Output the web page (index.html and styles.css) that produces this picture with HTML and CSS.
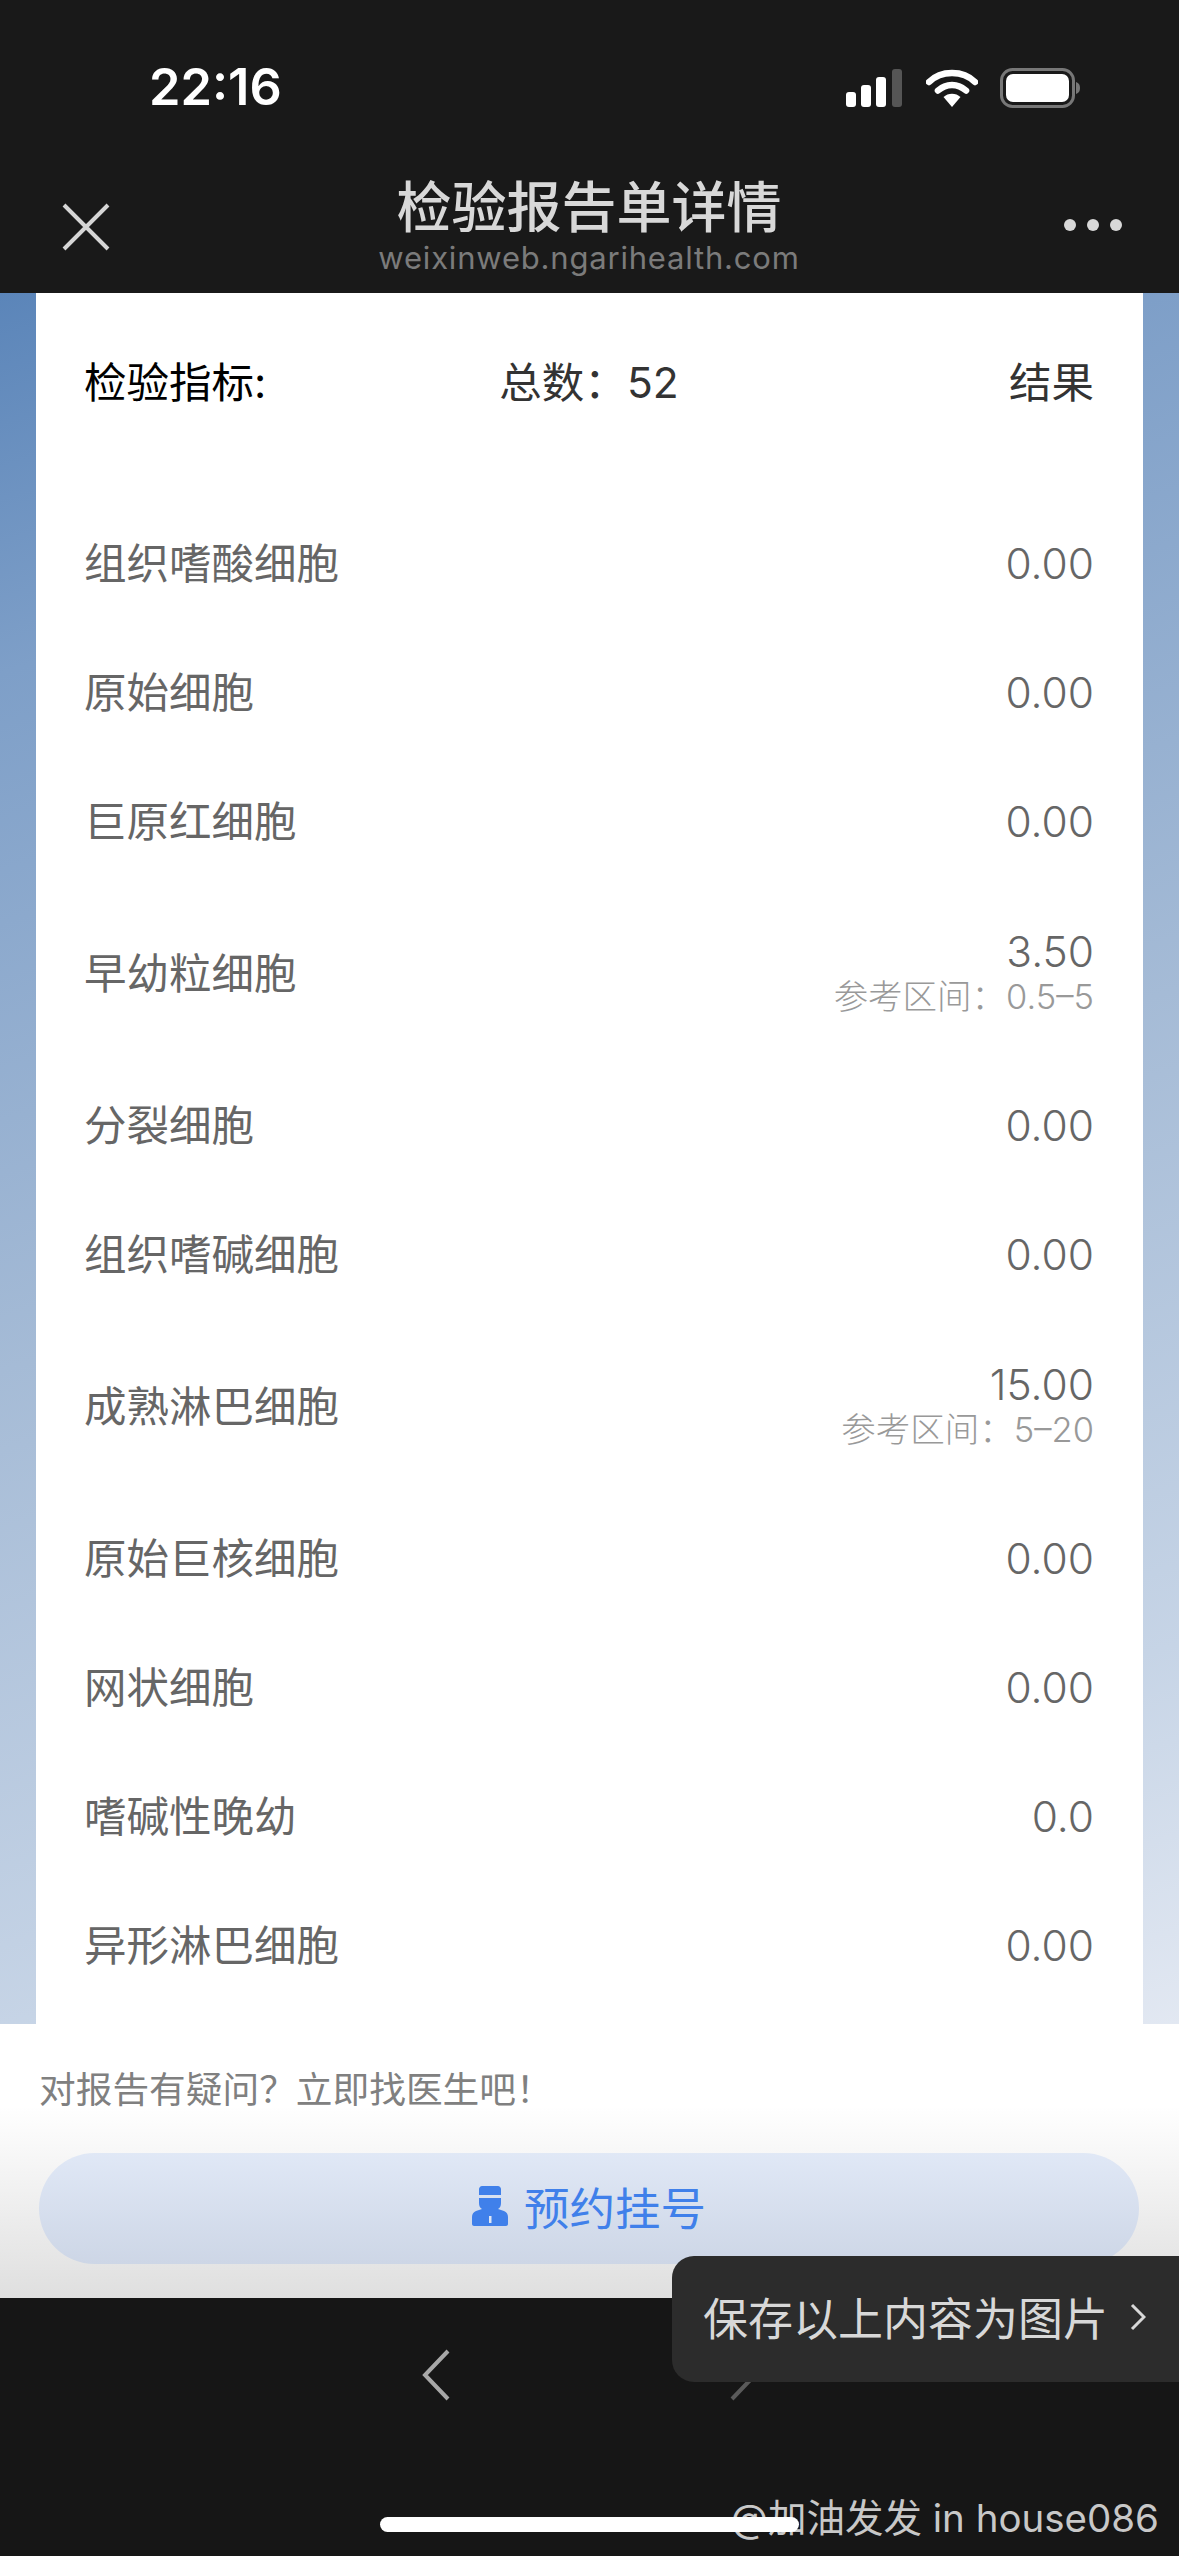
FILE: index.html
```html
<!DOCTYPE html>
<html lang="zh-CN">
<head>
  <meta charset="UTF-8">
  <title>检验报告单详情</title>
  <link rel="stylesheet" href="styles.css">
</head>
<body>
  <div class="phone">
    <header class="top">
      <div class="status">
        <span class="time">22:16</span>
        <div class="status-icons">
          <svg width="58" height="38" viewBox="0 0 58 38">
            <rect x="0" y="23" width="10" height="15" rx="3" fill="#fff"/>
            <rect x="15" y="16" width="10" height="22" rx="3" fill="#fff"/>
            <rect x="30" y="8" width="10" height="30" rx="3" fill="#fff"/>
            <rect x="46" y="0" width="10" height="38" rx="3" fill="#555"/>
          </svg>
          <svg width="52" height="38" viewBox="0 0 52 38">
            <path d="M3 13C15 1 37 1 49 13" fill="none" stroke="#fff" stroke-width="6.5" stroke-linecap="round"/>
            <path d="M12 21.500C20 14 32 14 40 21.500" fill="none" stroke="#fff" stroke-width="6.500" stroke-linecap="round"/>
            <path d="M17.500 28C22 23.500 30 23.500 34.500 28L26 38Z" fill="#fff"/>
          </svg>
          <svg width="80" height="40" viewBox="0 0 80 40">
            <rect x="1.500" y="1.500" width="72" height="37" rx="11" fill="none" stroke="#777" stroke-width="3"/>
            <rect x="6" y="6" width="63" height="28" rx="7" fill="#fff"/>
            <path d="M76 14C79 15 80 17 80 20C80 23 79 25 76 26Z" fill="#777"/>
          </svg>
        </div>
      </div>
      <nav class="nav">
        <svg class="nav-close" width="48" height="48" viewBox="0 0 48 48">
          <path d="M2 2L46 46M46 2L2 46" stroke="#d6d6d6" stroke-width="4"/>
        </svg>
        <div class="nav-title">
          <div class="title">检验报告单详情</div>
          <div class="domain">weixinweb.ngarihealth.com</div>
        </div>
        <div class="nav-more"><i></i><i></i><i></i></div>
      </nav>
    </header>

    <main class="content">
      <section class="card">
        <div class="card-head">
          <span class="head-label">检验指标:</span>
          <span class="head-total">总数：<b>52</b></span>
          <span class="head-result">结果</span>
        </div>
        <ul class="items">
          <li class="item"><span>组织嗜酸细胞</span><div class="val">0.00</div></li>
          <li class="item"><span>原始细胞</span><div class="val">0.00</div></li>
          <li class="item"><span>巨原红细胞</span><div class="val">0.00</div></li>
          <li class="item item-tall"><span>早幼粒细胞</span><div class="val">3.50<small>参考区间：0.5–5</small></div></li>
          <li class="item"><span>分裂细胞</span><div class="val">0.00</div></li>
          <li class="item"><span>组织嗜碱细胞</span><div class="val">0.00</div></li>
          <li class="item item-tall"><span>成熟淋巴细胞</span><div class="val">15.00<small>参考区间：5–20</small></div></li>
          <li class="item"><span>原始巨核细胞</span><div class="val">0.00</div></li>
          <li class="item"><span>网状细胞</span><div class="val">0.00</div></li>
          <li class="item"><span>嗜碱性晚幼</span><div class="val">0.0</div></li>
          <li class="item"><span>异形淋巴细胞</span><div class="val">0.00</div></li>
        </ul>
      </section>
    </main>

    <section class="ask">
      <p class="ask-text">对报告有疑问？立即找医生吧！</p>
      <button class="ask-btn">
        <svg width="36" height="40" viewBox="0 0 36 40">
          <path d="M7 3C7 1.500 8.500 0 10 0H26C27.500 0 29 1.500 29 3V9H7Z" fill="#4080ea"/>
          <path d="M7 12H29V17C29 20 28 22 26 23L32 25C34.500 26 36 28 36 31V38C36 39 35 40 34 40H2C1 40 0 39 0 38V31C0 28 1.500 26 4 25L10 23C8 22 7 20 7 17Z" fill="#4080ea"/>
          <rect x="17" y="30" width="2.500" height="7" fill="#dfe6f3"/>
        </svg>
        <span>预约挂号</span>
      </button>
    </section>

    <footer class="bottom">
      <svg class="chev" width="30" height="52" viewBox="0 0 30 52">
        <path d="M27 2L4 26L27 50" fill="none" stroke="#a8a8a8" stroke-width="4"/>
      </svg>
      <svg class="chev" width="30" height="52" viewBox="0 0 30 52">
        <path d="M3 2L26 26L3 50" fill="none" stroke="#5a5a5a" stroke-width="4"/>
      </svg>
    </footer>

    <div class="toast">保存以上内容为图片<svg width="16" height="28" viewBox="0 0 16 28"><path d="M2 2L14 14L2 26" fill="none" stroke="#d8d8d8" stroke-width="3"/></svg></div>
    <div class="mark">@加油发发 in house086</div>
    <div class="home-bar"></div>
  </div>
</body>
</html>
```

FILE: styles.css
```css
* {
  box-sizing: border-box;
}
html, body {
  margin: 0;
  padding: 0;
}
body {
  font-family: "Inter", "Noto Sans CJK SC", sans-serif;
  background: #161616;
}
.phone {
  position: relative;
  width: 1179px;
  height: 2556px;
  display: flex;
  flex-direction: column;
  overflow: hidden;
}

/* status bar + wechat nav */
.top {
  height: 293px;
  background: #191919;
  color: #fff;
}
.status {
  height: 173px;
  padding: 56px 99px 0 149px;
  display: flex;
  justify-content: space-between;
  align-items: flex-start;
}
.time {
  font-size: 50.5px;
  line-height: 62px;
  font-weight: 600;
}
.status-icons {
  display: flex;
  gap: 22px;
  padding-top: 12px;
  align-items: center;
}
.nav {
  display: grid;
  grid-template-columns: 1fr auto 1fr;
  padding: 0 63px 0 62px;
}
.nav-close {
  margin-top: 30px;
}
.nav-title {
  text-align: center;
  margin-top: 2px;
}
.title {
  font-size: 55px;
  line-height: 64px;
  color: #d8d8d8;
  font-weight: 500;
}
.domain {
  font-size: 31px;
  line-height: 38px;
  letter-spacing: 0.8px;
  color: #7b7b7b;
}
.nav-more {
  display: flex;
  justify-content: flex-end;
  gap: 11px;
  margin-top: 46px;
  margin-right: -6px;
}
.nav-more i {
  width: 12px;
  height: 12px;
  border-radius: 50%;
  background: #d8d8d8;
}

/* report */
.content {
  height: 1731px;
  padding: 0 36px;
  background: linear-gradient(162deg, #5b85b9 0%, #7e9fc8 18%, #a5bbd6 51%, #c6d4e6 82%, #e2e8f2 100%);
}
.card {
  height: 100%;
  background: #fff;
  padding: 0 49px 0 48px;
  overflow: hidden;
}
.card-head {
  display: grid;
  grid-template-columns: 1fr auto 1fr;
  align-items: center;
  padding-top: 38px;
  height: 142px;
  font-size: 42.5px;
  line-height: 60px;
  color: #333;
}
.head-label {
  color: #000;
}
.head-total b {
  font-weight: 400;
}
.head-result {
  text-align: right;
}
.items {
  list-style: none;
  margin: 0;
  padding: 64px 0 0;
}
.item {
  height: 129px;
  display: flex;
  justify-content: space-between;
  align-items: center;
  font-size: 42.5px;
  line-height: 52px;
  color: #666;
}
.item-tall {
  height: 175px;
}
.val {
  text-align: right;
  font-weight: 300;
}
.item-tall .val {
  padding-bottom: 6px;
}
.val small {
  display: block;
  font-size: 34.5px;
  line-height: 38px;
  color: #999;
}

/* ask a doctor */
.ask {
  height: 274px;
  padding: 41px 40px 0 39px;
  background: linear-gradient(180deg, #fff 0%, #fff 30%, #dfdfdf 100%);
}
.ask-text {
  margin: 0;
  font-size: 36.7px;
  line-height: 50px;
  color: #808080;
}
.ask-btn {
  width: 100%;
  height: 111px;
  margin-top: 38px;
  padding: 0 0 5px;
  border: 0;
  border-radius: 56px;
  background: linear-gradient(180deg, #e0e8f6 0%, #cdd6e6 100%);
  display: flex;
  justify-content: center;
  align-items: center;
  gap: 16px;
  font-family: inherit;
  font-size: 45.5px;
  color: #4080ea;
}

/* bottom toolbar */
.bottom {
  flex: 1;
  background: #161616;
  display: flex;
  justify-content: center;
  gap: 278px;
  padding-top: 51px;
}
.chev {
  display: block;
}
.toast {
  position: absolute;
  left: 672px;
  top: 2256px;
  width: 507px;
  height: 126px;
  border-radius: 22px 0 0 22px;
  background: #2c2c2c;
  display: flex;
  align-items: center;
  gap: 22px;
  padding: 0 0 5px 31px;
  font-size: 45px;
  color: #d8d8d8;
}
.mark {
  position: absolute;
  right: 20px;
  top: 2488px;
  font-size: 38.5px;
  line-height: 60px;
  color: #c8c8c8;
  white-space: nowrap;
}
.home-bar {
  position: absolute;
  left: 380px;
  top: 2517px;
  width: 419px;
  height: 15px;
  border-radius: 8px;
  background: #fff;
}
```
